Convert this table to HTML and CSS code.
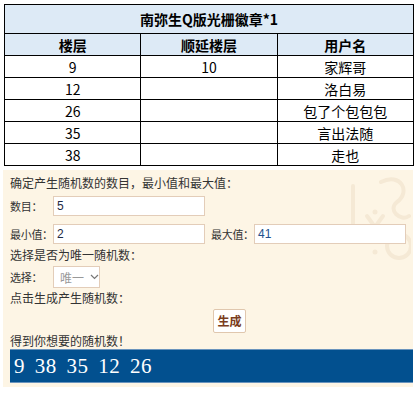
FILE: index.html
```html
<!DOCTYPE html>
<html lang="zh">
<head>
<meta charset="utf-8">
<link rel="stylesheet" href="styles.css">
</head>
<body>
<table class="badge-table">
  <tr class="title-row"><th colspan="3">南弥生Q版光栅徽章*1</th></tr>
  <tr class="head-row"><th class="c1">楼层</th><th class="c2">顺延楼层</th><th class="c3">用户名</th></tr>
  <tr><td>9</td><td>10</td><td>家辉哥</td></tr>
  <tr><td>12</td><td></td><td>洛白易</td></tr>
  <tr><td>26</td><td></td><td>包了个包包包</td></tr>
  <tr><td>35</td><td></td><td>言出法随</td></tr>
  <tr><td>38</td><td></td><td>走也</td></tr>
</table>

<div class="gen">
  <svg class="deco" width="66" height="95" viewBox="0 0 66 95">
    <g fill="none" stroke="#f5e9d5" stroke-width="4" stroke-linecap="round">
      <path d="M8 14 V58 H26"/>
      <path d="M36 10 C56 0 66 20 52 30 C42 38 56 50 64 44"/>
      <path d="M22 44 L38 66 M38 44 L22 66"/>
      <circle cx="54" cy="74" r="12"/>
    </g>
    <g fill="#f5e9d5"><circle cx="30" cy="80" r="2.5"/><circle cx="30" cy="40" r="2.5"/></g>
  </svg>
  <p class="line first">确定产生随机数的数目，最小值和最大值：</p>
  <div class="row r-count">
    <label class="lbl">数目：</label>
    <span class="field w-full">5</span>
  </div>
  <div class="row r-range">
    <label class="lbl">最小值：</label>
    <span class="field">2</span>
    <label class="lbl lbl-max">最大值：</label>
    <span class="field blue">41</span>
  </div>
  <p class="line">选择是否为唯一随机数：</p>
  <div class="row r-select">
    <label class="lbl">选择：</label>
    <span class="select">唯一<svg width="9" height="6" viewBox="0 0 9 6"><path d="M1 1 L4.5 4.5 L8 1" fill="none" stroke="#777" stroke-width="1.2"/></svg></span>
  </div>
  <p class="line short">点击生成产生随机数：</p>
  <div class="row r-btn">
    <span class="btn">生成</span>
  </div>
  <p class="line result-lbl">得到你想要的随机数！</p>
  <div class="result">9 38 35 12 26</div>
</div>
</body>
</html>
```

FILE: styles.css
```css
html, body {
  margin: 0;
  padding: 0;
  background: #fff;
}
body {
  padding: 4px 0 0 4px;
  font-family: "Noto Sans CJK SC", "Noto Sans", sans-serif;
}
.badge-table {
  border-collapse: collapse;
  width: 410px;
  table-layout: fixed;
  font-size: 14px;
  color: #000;
  border: 1px solid #000;
}
.badge-table th, .badge-table td {
  border: 1px solid #000;
  text-align: center;
  padding: 0;
  height: 21px;
  line-height: 20px;
}
.title-row th {
  height: 28px;
  background: #ddeaf6;
  font-weight: bold;
}
.head-row th {
  background: #ddeaf6;
  font-weight: bold;
}
.c1 { width: 71px; }
.c2 { width: 104px; }

.gen {
  position: relative;
  margin: 4px 0 0 -1px;
  width: 410px;
  background: #fdf5e5;
  padding: 2px 0 4px 0;
  font-size: 12px;
  color: #333;
  overflow: hidden;
}
.deco {
  position: absolute;
  right: 2px;
  top: 2px;
}
.line {
  position: relative;
  margin: 0;
  padding-left: 7px;
  height: 22px;
  line-height: 22px;
}
.line.short { height: 20px; line-height: 20px; }
.line.result-lbl { height: 16px; line-height: 16px; }
.row {
  position: relative;
  display: flex;
  align-items: center;
  padding-left: 7px;
}
.r-count { margin-top: 2px; height: 20px; }
.r-range { margin-top: 8px; height: 20px; }
.r-select { height: 22px; }
.r-btn { margin-top: 1px; height: 24px; padding-left: 210px; }
.lbl {
  width: 43px;
  flex: none;
  white-space: nowrap;
  font-size: 11px;
  letter-spacing: -0.3px;
}
.lbl-max { margin-left: 6px; }
.field {
  box-sizing: border-box;
  width: 152px;
  height: 20px;
  border: 1px solid #e3cdb9;
  background: #fff;
  padding-left: 3px;
  line-height: 18px;
  font-size: 12px;
  color: #1d2a44;
  font-family: "Liberation Sans", Arial, sans-serif;
}
.field.blue { color: #24518c; }
.select {
  box-sizing: border-box;
  display: inline-flex;
  align-items: center;
  gap: 6px;
  width: 47px;
  height: 22px;
  border: 1px solid #e3cdb9;
  background: #fff;
  padding-left: 6px;
  color: #999;
}
.btn {
  box-sizing: border-box;
  width: 33px;
  height: 24px;
  border: 1px solid #e0c7ae;
  border-radius: 2px;
  background: #fff;
  color: #7a3d20;
  font-weight: bold;
  text-align: center;
  line-height: 22px;
}
.result {
  margin-left: 7px;
  height: 34px;
  box-sizing: border-box;
  background: #02508f;
  border-top: 1px solid #6a94bd;
  border-bottom: 1px solid #6a94bd;
  color: #fff;
  font-family: "Liberation Serif", "Times New Roman", serif;
  font-size: 21px;
  line-height: 32px;
  padding-left: 4px;
  word-spacing: 4px;
  letter-spacing: 0.5px;
}
```
